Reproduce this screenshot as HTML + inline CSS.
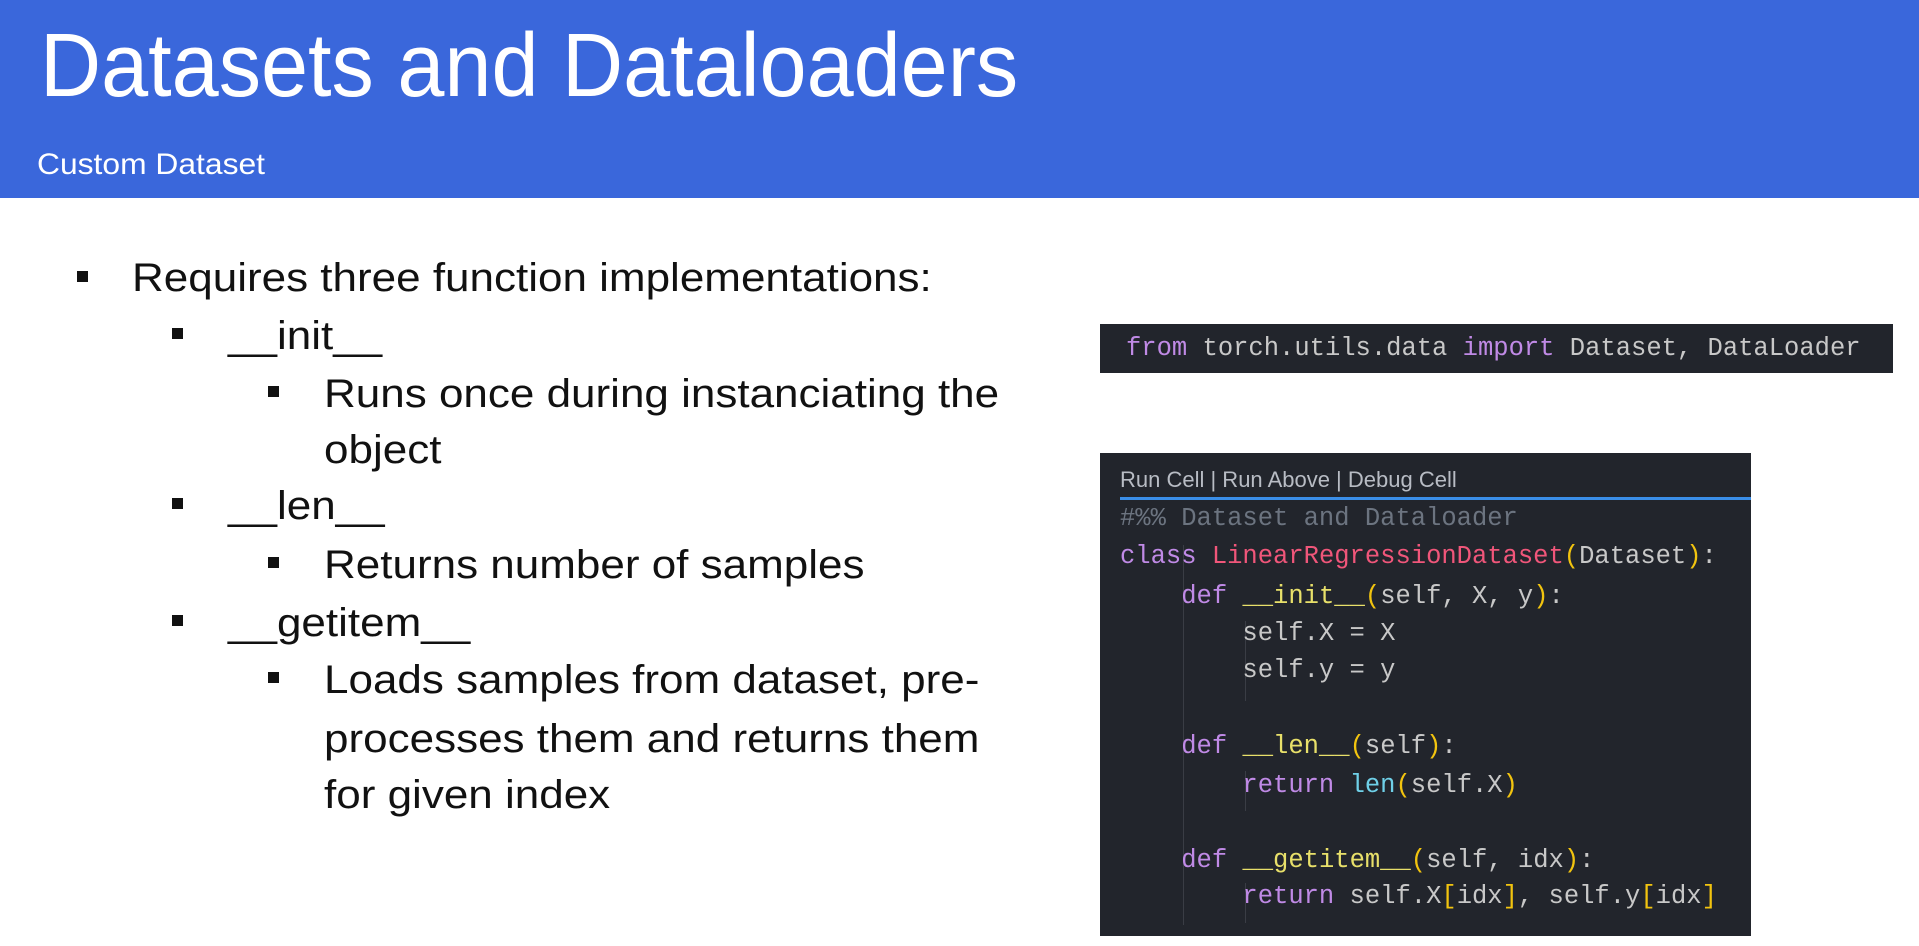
<!DOCTYPE html>
<html><head><meta charset="utf-8"><style>
body{margin:0;width:1919px;height:946px;background:#fff;position:relative;overflow:hidden;font-family:"Liberation Sans",sans-serif}
.hdr{position:absolute;left:0;top:0;width:1919px;height:198px;background:#3a67db}
.title{position:absolute;left:40px;top:15px;color:#fff;font-size:90px;white-space:nowrap;transform:scaleX(0.94);transform-origin:left top}
.sub{position:absolute;left:37px;top:148px;color:#fff;font-size:30px;white-space:nowrap;transform:scaleX(1.06);transform-origin:left top}
.t{position:absolute;color:#111;font-size:40px;white-space:nowrap;transform:scaleX(1.1);transform-origin:left top;margin-top:3px}
.b{position:absolute;width:11px;height:11px;background:#111}
.code{position:absolute;background:#22252c;font-family:"Liberation Mono",monospace;font-size:25.5px;color:#c8c8c8;white-space:pre}
.l{position:absolute;left:26px}
.kw{color:#c08ae6}.cn{color:#f0567a}.fn{color:#e8e06a}.p{color:#f2c40f}.bi{color:#6fd0e8}.cm{color:#6c7480}
.g{position:absolute;width:1px;background:#3a3d45}
</style></head><body>
<div class="hdr"><div class="title">Datasets and Dataloaders</div><div class="sub">Custom Dataset</div></div>

<div class="b" style="left:77px;top:271px"></div><div class="t" style="left:132px;top:253px">Requires three function implementations:</div>
<div class="b" style="left:172px;top:328px"></div><div class="t" style="left:228px;top:311px">__init__</div>
<div class="b" style="left:268px;top:386px"></div><div class="t" style="left:324px;top:369px">Runs once during instanciating the</div>
<div class="t" style="left:324px;top:425px">object</div>
<div class="b" style="left:172px;top:498px"></div><div class="t" style="left:228px;top:481px">__len__</div>
<div class="b" style="left:268px;top:557px"></div><div class="t" style="left:324px;top:540px">Returns number of samples</div>
<div class="b" style="left:172px;top:615px"></div><div class="t" style="left:228px;top:598px">__getitem__</div>
<div class="b" style="left:268px;top:672px"></div><div class="t" style="left:324px;top:655px">Loads samples from dataset, pre-</div>
<div class="t" style="left:324px;top:714px">processes them and returns them</div>
<div class="t" style="left:324px;top:770px">for given index</div>

<div class="code" style="left:1100px;top:324px;width:793px;height:49px"><div class="l" style="top:10px"><span class="kw">from</span> torch.utils.data <span class="kw">import</span> Dataset, DataLoader</div></div>

<div class="code" style="left:1100px;top:453px;width:651px;height:483px">
<div style="position:absolute;left:20px;top:14px;font-family:'Liberation Sans',sans-serif;font-size:22px;color:#b8bcc4;white-space:nowrap">Run Cell | Run Above | Debug Cell</div>
<div style="position:absolute;left:20px;top:44px;width:631px;height:3px;background:#3a8ee8"></div>
<div class="g" style="left:83px;top:92px;height:380px"></div>
<div class="g" style="left:145px;top:168px;height:80px"></div>
<div class="g" style="left:145px;top:318px;height:40px"></div>
<div class="g" style="left:145px;top:430px;height:40px"></div>
<div class="l" style="left:20px;top:51px"><span class="cm">#%% Dataset and Dataloader</span></div>
<div class="l" style="left:20px;top:89px"><span class="kw">class</span> <span class="cn">LinearRegressionDataset</span><span class="p">(</span>Dataset<span class="p">)</span>:</div>
<div class="l" style="left:20px;top:129px">    <span class="kw">def</span> <span class="fn">__init__</span><span class="p">(</span>self, X, y<span class="p">)</span>:</div>
<div class="l" style="left:20px;top:166px">        self.X = X</div>
<div class="l" style="left:20px;top:203px">        self.y = y</div>
<div class="l" style="left:20px;top:279px">    <span class="kw">def</span> <span class="fn">__len__</span><span class="p">(</span>self<span class="p">)</span>:</div>
<div class="l" style="left:20px;top:318px">        <span class="kw">return</span> <span class="bi">len</span><span class="p">(</span>self.X<span class="p">)</span></div>
<div class="l" style="left:20px;top:393px">    <span class="kw">def</span> <span class="fn">__getitem__</span><span class="p">(</span>self, idx<span class="p">)</span>:</div>
<div class="l" style="left:20px;top:429px">        <span class="kw">return</span> self.X<span class="p">[</span>idx<span class="p">]</span>, self.y<span class="p">[</span>idx<span class="p">]</span></div>
</div>
</body></html>
